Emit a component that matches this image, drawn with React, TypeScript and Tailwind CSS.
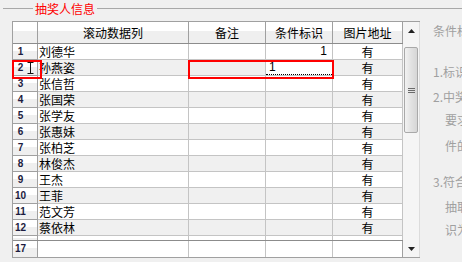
import React from 'react';

type Row = { n: number; name: string; flag?: string; pic: boolean };

const rows: Row[] = [
    { n: 1, name: '刘德华', flag: '1', pic: true },
    { n: 2, name: '孙燕姿', flag: '1', pic: true },
    { n: 3, name: '张信哲', pic: true },
    { n: 4, name: '张国荣', pic: true },
    { n: 5, name: '张学友', pic: true },
    { n: 6, name: '张惠妹', pic: true },
    { n: 7, name: '张柏芝', pic: true },
    { n: 8, name: '林俊杰', pic: true },
    { n: 9, name: '王杰', pic: true },
    { n: 10, name: '王菲', pic: true },
    { n: 11, name: '范文芳', pic: true },
    { n: 12, name: '蔡依林', pic: true },
];

const headGrad = 'bg-[linear-gradient(to_bottom,#ffffff_0%,#ffffff_45%,#efefef_45%,#efefef_100%)]';

function RowHead({ n }: { n?: number }) {
    return (
        <div className={`flex w-[25px] items-center border-r border-b border-[#a0a0a0] ${headGrad}`}>
            <span className="w-[15px] text-center font-['Liberation_Sans',sans-serif] text-[10px] leading-none font-bold text-[#1c1c40]">
                {n}
            </span>
        </div>
    );
}

function DataRow({ row }: { row: Row }) {
    const even = row.n % 2 === 0;
    const bg = even ? 'bg-[#f0f0f0]' : 'bg-white';
    const editing = row.n === 2;
    return (
        <div className="flex h-[16px]">
            <RowHead n={row.n} />
            <div className={`w-[151px] border-r border-b border-[#c4c4c4] pl-[1px] text-[12px] leading-[15px] ${bg}`}>{row.name}</div>
            <div className={`w-[77px] border-r border-b border-[#c4c4c4] ${bg}`} />
            {editing ? (
                <div className="w-[67px] border-r border-b border-[#c4c4c4] bg-white">
                    <div className="h-[15px] border-b border-dotted border-black pl-[3px] font-['Liberation_Sans',sans-serif] text-[12px] leading-[15px]">
                        {row.flag}
                    </div>
                </div>
            ) : (
                <div className={`w-[67px] border-r border-b border-[#c4c4c4] pr-[5px] text-right font-['Liberation_Sans',sans-serif] text-[12px] leading-[15px] ${bg}`}>
                    {row.flag}
                </div>
            )}
            <div className={`w-[70px] border-r border-b border-[#c4c4c4] text-center text-[12px] leading-[15px] ${bg}`}>
                {row.pic ? '有' : ''}
            </div>
        </div>
    );
}

function ScrollBar() {
    return (
        <div className="flex w-[17px] flex-col border-r border-[#dcdcdc] bg-[#f5f5f5]">
            <div className="flex h-[17px] items-center justify-center">
                <svg width="7" height="4" viewBox="0 0 7 4">
                    <path d="M3.5 0 L7 4 L0 4 Z" fill="#222" />
                </svg>
            </div>
            <div className="mx-[1px] mt-[8px] flex h-[86px] items-center justify-center rounded-[2px] border border-[#a9a9a9] bg-[linear-gradient(to_right,#f2f2f2,#e2e2e2_50%,#d6d6d6)]">
                <div className="flex flex-col gap-[1px]">
                    <div className="h-px w-[7px] bg-[#6a6a6a]" />
                    <div className="h-px w-[7px] bg-[#6a6a6a]" />
                    <div className="h-px w-[7px] bg-[#6a6a6a]" />
                </div>
            </div>
            <div className="flex-1" />
            <div className="flex h-[17px] items-center justify-center">
                <svg width="7" height="4" viewBox="0 0 7 4">
                    <path d="M0 0 L7 0 L3.5 4 Z" fill="#222" />
                </svg>
            </div>
        </div>
    );
}

function Grid() {
    return (
        <div className="relative flex h-[237px] border-t border-b border-l border-[#a0a0a0] bg-white">
            <div className="flex w-[390px] flex-col">
                <div className="flex h-[22px] border-b border-[#8c8c8c] text-[12px]">
                    <div className={`w-[25px] border-r border-[#a0a0a0] ${headGrad}`} />
                    <div className={`flex w-[151px] items-center justify-center border-r border-[#a0a0a0] ${headGrad}`}>滚动数据列</div>
                    <div className={`flex w-[77px] items-center justify-center border-r border-[#a0a0a0] ${headGrad}`}>备注</div>
                    <div className={`flex w-[67px] items-center justify-center border-r border-[#a0a0a0] ${headGrad}`}>条件标识</div>
                    <div className={`flex w-[70px] items-center justify-center border-r border-[#a0a0a0] ${headGrad}`}>图片地址</div>
                </div>
                {rows.map((row) => (
                    <DataRow key={row.n} row={row} />
                ))}
                <div className="flex h-[4px]">
                    <div className={`w-[25px] border-r border-[#a0a0a0] ${headGrad}`} />
                    <div className="w-[151px] border-r border-[#c4c4c4] bg-white" />
                    <div className="w-[77px] border-r border-[#c4c4c4] bg-white" />
                    <div className="w-[67px] border-r border-[#c4c4c4] bg-white" />
                    <div className="w-[70px] border-r border-[#c4c4c4] bg-white" />
                </div>
                <div className="flex h-[17px] border-t border-[#8c8c8c]">
                    <div className={`flex w-[25px] items-center border-r border-[#a0a0a0] ${headGrad}`}>
                        <span className="w-[15px] text-center font-['Liberation_Sans',sans-serif] text-[10px] leading-none font-bold text-[#1c1c40]">17</span>
                    </div>
                    <div className="w-[151px] border-r border-[#c4c4c4] bg-white" />
                    <div className="w-[77px] border-r border-[#c4c4c4] bg-white" />
                    <div className="w-[67px] border-r border-[#c4c4c4] bg-white" />
                    <div className="w-[70px] border-r border-[#a0a0a0] bg-white" />
                </div>
            </div>
            <ScrollBar />

            {/* selection outlines and mouse cursor */}
            <div className="absolute top-[38px] left-[-1px] h-[19px] w-[30px] border-2 border-[#ff0000]" />
            <div className="absolute top-[38px] left-[175px] h-[19px] w-[146px] border-2 border-[#ff0000]" />
            <svg className="absolute top-[40px] left-[14px]" width="7" height="12" viewBox="0 0 7 12">
                <path d="M0.5 0.5 H6.5 M3.5 0.5 V11.5 M0.5 11.5 H6.5" stroke="#111" strokeWidth="1" fill="none" />
            </svg>
        </div>
    );
}

const notes: { text: string; cls: string }[] = [
    { text: '条件标识说明：', cls: 'mt-[2px] pl-[13px]' },
    { text: '1.标识为1的人员必中奖', cls: 'mt-[25px] pl-[13px]' },
    { text: '2.中奖人员须满足以下', cls: 'mt-[9px] pl-[13px]' },
    { text: '要求：符合抽奖条', cls: 'mt-[7px] pl-[25px]' },
    { text: '件的人员方可参与', cls: 'mt-[10px] pl-[25px]' },
    { text: '3.符合条件者随机', cls: 'mt-[20px] pl-[13px]' },
    { text: '抽取，中奖后标', cls: 'mt-[9px] pl-[25px]' },
    { text: '识为已中奖', cls: 'mt-[7px] pl-[25px]' },
];

export default function App() {
    return (
        <div className="h-[262px] w-[462px] overflow-hidden bg-[#f0f0f0] font-['Noto_Sans_CJK_SC',sans-serif] text-black">
            <div className="flex h-[21px] items-start">
                <div className="mt-[8px] ml-[3px] h-px w-[30px] bg-[#a8a8a8]" />
                <span className="ml-[2px] text-[12px] leading-[18px] text-[#ff0000]">抽奖人信息</span>
                <div className="mt-[8px] ml-[2px] h-px flex-1 bg-[#a8a8a8]" />
            </div>
            <div className="flex">
                <div className="w-[12px]" />
                <Grid />
                <div className="flex flex-1 flex-col overflow-hidden text-[12px] leading-[16px] whitespace-nowrap text-[#a0a0a0]">
                    {notes.map((note) => (
                        <div key={note.text} className={note.cls}>
                            {note.text}
                        </div>
                    ))}
                </div>
            </div>
        </div>
    );
}
